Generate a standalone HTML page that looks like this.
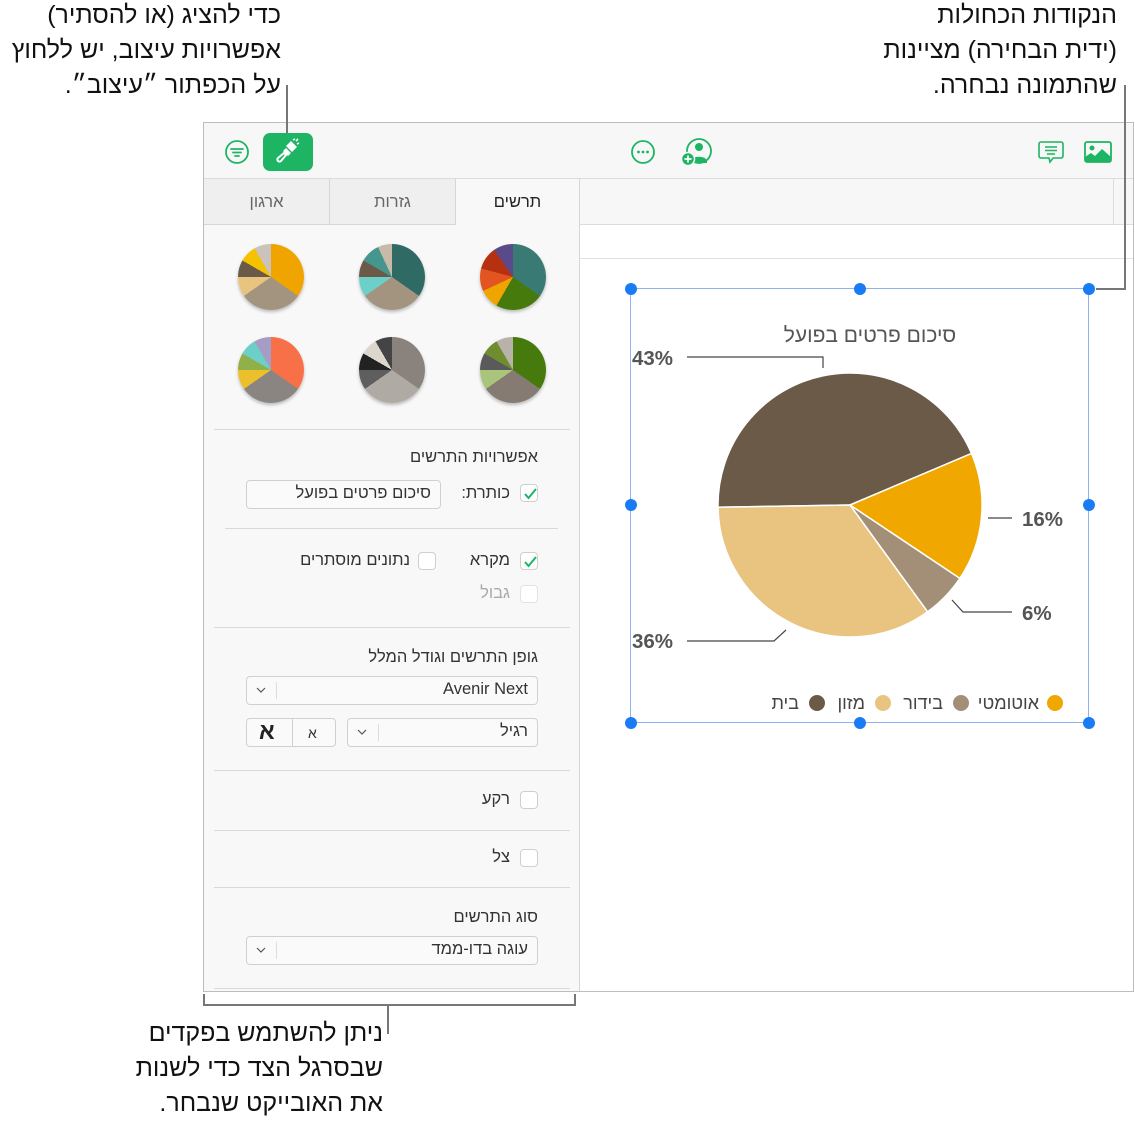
<!DOCTYPE html>
<html><head><meta charset="utf-8"><style>
*{margin:0;padding:0;box-sizing:border-box}
body{width:1135px;height:1121px;background:#fff;position:relative;overflow:hidden;font-family:"Liberation Sans","Noto Sans CJK SC",sans-serif;color:#222}
.a{position:absolute}
.ann{position:absolute;font-size:25px;line-height:35px;direction:rtl;text-align:right;color:#111;white-space:nowrap}
.t{position:absolute;direction:rtl;white-space:nowrap;font-size:16.5px;color:#333}
.hr{position:absolute;height:1px;background:#d9d9d9}
.cb{position:absolute;width:18px;height:18px;border:1px solid #cfcfcf;border-radius:4px;background:#fff}
.cb svg{position:absolute;left:1px;top:1px}
.box{position:absolute;border:1px solid #d0d0d0;border-radius:4px;background:#fafafa}
.pie{position:absolute;width:66px;height:66px;border-radius:50%;box-shadow:0 2px 3px rgba(0,0,0,.25)}
.dd{position:absolute;font-size:15px;color:#333;direction:ltr}
.h{position:absolute;width:12px;height:12px;border-radius:50%;background:#1a7cf5;margin:-6px 0 0 -6px}
</style></head><body>

<div class="ann" style="right:854px;top:-2px">כדי להציג (או להסתיר)<br>אפשרויות עיצוב, יש ללחוץ<br>על הכפתור ״עיצוב״.</div>
<div class="ann" style="right:18px;top:-2px">הנקודות הכחולות<br>(ידית הבחירה) מציינות<br>שהתמונה נבחרה.</div>
<div class="ann" style="right:752px;top:1016px">ניתן להשתמש בפקדים<br>שבסרגל הצד כדי לשנות<br>את האובייקט שנבחר.</div>

<!-- window -->
<div class="a" style="left:203px;top:122px;width:931px;height:870px;border:1px solid #bdbdbd;background:#fff"></div>
<div class="a" style="left:204px;top:123px;width:929px;height:56px;background:#f7f7f7;border-bottom:1px solid #dcdcdc"></div>
<div class="a" style="left:580px;top:179px;width:553px;height:46px;background:#f7f7f7;border-bottom:1px solid #dcdcdc"></div>
<div class="a" style="left:1113px;top:179px;width:1px;height:46px;background:#dcdcdc"></div>
<div class="a" style="left:580px;top:258px;width:553px;height:1px;background:#e2e2e2"></div>
<div class="a" style="left:204px;top:179px;width:376px;height:812px;background:#f8f8f8;border-right:1px solid #d6d6d6"></div>

<!-- callout lines -->
<div class="a" style="left:286px;top:85px;width:2px;height:48px;background:#777"></div>
<div class="a" style="left:1124px;top:85px;width:2px;height:204px;background:#777"></div>
<div class="a" style="left:1096px;top:288px;width:30px;height:2px;background:#777"></div>
<div class="a" style="left:203px;top:994px;width:373px;height:12px;border:2px solid #777;border-top:none"></div>
<div class="a" style="left:387px;top:1006px;width:2px;height:28px;background:#777"></div>

<!-- toolbar icons -->
<svg class="a" style="left:224px;top:139px" width="26" height="26" viewBox="0 0 26 26"><circle cx="13" cy="13" r="11" fill="none" stroke="#1db464" stroke-width="1.8"/><path d="M7 10h12M9 13.5h8M11 17h4" stroke="#1db464" stroke-width="1.8" stroke-linecap="round"/></svg>
<div class="a" style="left:263px;top:133px;width:50px;height:38px;background:#1db464;border-radius:7px"></div>
<svg class="a" style="left:274px;top:137px" width="28" height="30" viewBox="0 0 28 30"><path d="M17 4l6 6-5 5-6-6z" fill="#fff"/><path d="M12 11l5 5-3 3-5-5z" fill="#fff"/><path d="M10 16l2 2-5 6a2 2 0 0 1-3-3z" fill="none" stroke="#fff" stroke-width="2"/><path d="M19 3l2-1M23 7l2-1M22 4l2-2" stroke="#fff" stroke-width="1.6"/></svg>
<svg class="a" style="left:630px;top:139px" width="26" height="26" viewBox="0 0 26 26"><circle cx="13" cy="13" r="11" fill="none" stroke="#1db464" stroke-width="1.8"/><circle cx="8.5" cy="13" r="1.4" fill="#1db464"/><circle cx="13" cy="13" r="1.4" fill="#1db464"/><circle cx="17.5" cy="13" r="1.4" fill="#1db464"/></svg>
<svg class="a" style="left:680px;top:137px" width="34" height="30" viewBox="0 0 34 30"><circle cx="19" cy="14" r="12" fill="none" stroke="#1db464" stroke-width="1.8"/><circle cx="19" cy="10" r="4" fill="#1db464"/><path d="M11 23a9 6 0 0 1 16 0v3h-16z" fill="#1db464"/><circle cx="8" cy="22" r="6.5" fill="#1db464" stroke="#f7f7f7" stroke-width="1.5"/><path d="M8 18.5v7M4.5 22h7" stroke="#fff" stroke-width="1.8"/></svg>
<svg class="a" style="left:1037px;top:140px" width="28" height="26" viewBox="0 0 28 26"><path d="M4 2h20a2 2 0 0 1 2 2v12a2 2 0 0 1-2 2h-8l-3 4-1-4h-8a2 2 0 0 1-2-2v-12a2 2 0 0 1 2-2z" fill="none" stroke="#1db464" stroke-width="1.6"/><path d="M8 7h12M8 10.5h12M10 14h8" stroke="#1db464" stroke-width="1.5"/></svg>
<svg class="a" style="left:1084px;top:141px" width="28" height="22" viewBox="0 0 28 22"><rect x="1" y="1" width="26" height="20" rx="2" fill="none" stroke="#1db464" stroke-width="1.8"/><circle cx="8" cy="7" r="2.5" fill="#1db464"/><path d="M1 21v-5l6-4 4 3 7-7 9 8v5z" fill="#1db464"/></svg>

<!-- tabs -->
<div class="a" style="left:204px;top:179px;width:251px;height:46px;background:#efefef;border-bottom:1px solid #d6d6d6"></div>
<div class="a" style="left:329px;top:179px;width:1px;height:46px;background:#d6d6d6"></div>
<div class="a" style="left:455px;top:179px;width:1px;height:46px;background:#d6d6d6"></div>
<div class="t" style="left:455px;width:125px;text-align:center;top:193px;font-size:16.5px;color:#222">תרשים</div>
<div class="t" style="left:330px;width:125px;text-align:center;top:193px;font-size:16.5px;color:#666">גזרות</div>
<div class="t" style="left:204px;width:125px;text-align:center;top:193px;font-size:16.5px;color:#666">ארגון</div>

<!-- pies -->
<div class="pie" style="left:480px;top:244px;background:conic-gradient(#3a7a74 0 125deg,#467a0c 125deg 210deg,#f0a400 210deg 245deg,#e25420 245deg 285deg,#b5310f 285deg 325deg,#5a4a8a 325deg)"></div>
<div class="pie" style="left:359px;top:244px;background:conic-gradient(#2f6a64 0 125deg,#a39480 125deg 235deg,#6ccfc8 235deg 270deg,#6b5a48 270deg 300deg,#45968f 300deg 335deg,#c9b9a8 335deg)"></div>
<div class="pie" style="left:238px;top:244px;background:conic-gradient(#f0a400 0 125deg,#a39480 125deg 235deg,#e8c47f 235deg 270deg,#6b5a48 270deg 300deg,#f5c200 300deg 330deg,#cbc3bb 330deg)"></div>
<div class="pie" style="left:480px;top:337px;background:conic-gradient(#467a0c 0 125deg,#857b73 125deg 235deg,#a9c47d 235deg 270deg,#5a5a5a 270deg 300deg,#6f8c2e 300deg 330deg,#b8b2ab 330deg)"></div>
<div class="pie" style="left:359px;top:337px;background:conic-gradient(#8a837d 0 125deg,#b0aaa4 125deg 235deg,#5e5e5e 235deg 270deg,#222 270deg 300deg,#ddd6cc 300deg 330deg,#444 330deg)"></div>
<div class="pie" style="left:238px;top:337px;background:conic-gradient(#f87048 0 125deg,#8a8580 125deg 235deg,#ecc02c 235deg 270deg,#90b04a 270deg 300deg,#6ccfc8 300deg 330deg,#a59dc5 330deg)"></div>

<!-- sidebar controls -->
<div class="hr" style="left:214px;top:429px;width:356px"></div>
<div class="t" style="right:597px;top:448px">אפשרויות התרשים</div>
<div class="cb" style="left:520px;top:484px"><svg width="16" height="16"><path d="M3 8l3.5 4L14 3" fill="none" stroke="#1db464" stroke-width="2"/></svg></div>
<div class="t" style="right:625px;top:484px">כותרת:</div>
<div class="box" style="left:246px;top:480px;width:195px;height:29px;background:#fafafa"></div>
<div class="t" style="right:704px;top:484px">סיכום פרטים בפועל</div>
<div class="hr" style="left:225px;top:528px;width:333px"></div>
<div class="cb" style="left:520px;top:552px"><svg width="16" height="16"><path d="M3 8l3.5 4L14 3" fill="none" stroke="#1db464" stroke-width="2"/></svg></div>
<div class="t" style="right:625px;top:551px">מקרא</div>
<div class="cb" style="left:418px;top:552px"></div>
<div class="t" style="right:725px;top:551px">נתונים מוסתרים</div>
<div class="cb" style="left:520px;top:585px;border-color:#e3e3e3"></div>
<div class="t" style="right:625px;top:584px;color:#aaa">גבול</div>
<div class="hr" style="left:214px;top:627px;width:356px"></div>
<div class="t" style="right:597px;top:648px">גופן התרשים וגודל המלל</div>
<div class="box" style="left:246px;top:676px;width:292px;height:29px"></div>
<div class="a" style="left:276px;top:682px;width:1px;height:17px;background:#ddd"></div>
<svg class="a" style="left:256px;top:687px" width="10" height="7"><path d="M1 1l4 4 4-4" fill="none" stroke="#555" stroke-width="1.2"/></svg>
<div class="dd" style="right:607px;top:680px;font-size:16.5px">Avenir Next</div>
<div class="box" style="left:347px;top:718px;width:191px;height:29px"></div>
<div class="a" style="left:378px;top:724px;width:1px;height:17px;background:#ddd"></div>
<svg class="a" style="left:357px;top:729px" width="10" height="7"><path d="M1 1l4 4 4-4" fill="none" stroke="#555" stroke-width="1.2"/></svg>
<div class="t" style="right:607px;top:722px">רגיל</div>
<div class="box" style="left:246px;top:718px;width:90px;height:29px"></div>
<div class="a" style="left:292px;top:719px;width:1px;height:27px;background:#d0d0d0"></div>
<div class="t" style="left:259px;top:718px;font-size:23px;font-weight:bold;color:#222">א</div>
<div class="t" style="left:308px;top:725px;font-size:14px">א</div>
<div class="hr" style="left:214px;top:770px;width:356px"></div>
<div class="cb" style="left:520px;top:791px"></div>
<div class="t" style="right:625px;top:790px">רקע</div>
<div class="hr" style="left:214px;top:830px;width:356px"></div>
<div class="cb" style="left:520px;top:849px"></div>
<div class="t" style="right:625px;top:848px">צל</div>
<div class="hr" style="left:214px;top:887px;width:356px"></div>
<div class="t" style="right:597px;top:908px">סוג התרשים</div>
<div class="box" style="left:246px;top:936px;width:292px;height:29px"></div>
<div class="a" style="left:276px;top:942px;width:1px;height:17px;background:#ddd"></div>
<svg class="a" style="left:256px;top:947px" width="10" height="7"><path d="M1 1l4 4 4-4" fill="none" stroke="#555" stroke-width="1.2"/></svg>
<div class="t" style="right:607px;top:940px">עוגה בדו-ממד</div>
<div class="hr" style="left:214px;top:988px;width:356px"></div>

<!-- chart -->
<svg class="a" style="left:0;top:0" width="1135" height="1121" viewBox="0 0 1135 1121">
<rect x="630.5" y="288.5" width="458" height="434" fill="none" stroke="#8fb2ee" stroke-width="1"/>
<g stroke="#fff" stroke-width="1.5">
<path d="M850 505 L718.02 507.29 A132 132 0 0 1 971.51 453.43 Z" fill="#6b5a48"/>
<path d="M850 505 L971.51 453.43 A132 132 0 0 1 959.83 578.43 Z" fill="#f0a800"/>
<path d="M850 505 L959.83 578.43 A132 132 0 0 1 927.59 611.79 Z" fill="#a38f78"/>
<path d="M850 505 L927.59 611.79 A132 132 0 0 1 718.02 507.29 Z" fill="#e8c480"/>
</g>
<g fill="none" stroke="#444" stroke-width="1.2">
<path d="M687 357H823V368"/><path d="M988 518H1012"/><path d="M952 600L963 612H1012"/><path d="M687 641H774L786 630"/>
</g>
<g font-family="Liberation Sans,sans-serif" font-weight="bold" font-size="20.5" fill="#555">
<text x="632" y="365">43%</text><text x="1022" y="526">16%</text><text x="1022" y="620">6%</text><text x="632" y="648">36%</text>
</g>
<text x="870" y="342" text-anchor="middle" font-family="Liberation Sans,sans-serif" font-size="21" fill="#555" direction="rtl">סיכום פרטים בפועל</text>
<circle cx="1055" cy="703" r="8" fill="#f0a800"/><circle cx="961" cy="703" r="8" fill="#a38f78"/><circle cx="883" cy="703" r="8" fill="#e8c480"/><circle cx="817" cy="703" r="8" fill="#6b5a48"/>
<g font-family="Liberation Sans,sans-serif" font-size="18" fill="#444" text-anchor="start" direction="rtl">
<text x="1039" y="709">אוטומטי</text><text x="943" y="709">בידור</text><text x="865" y="709">מזון</text><text x="799" y="709">בית</text>
</g>
</svg>
<div class="h" style="left:631px;top:289px"></div><div class="h" style="left:860px;top:289px"></div><div class="h" style="left:1089px;top:289px"></div>
<div class="h" style="left:631px;top:505px"></div><div class="h" style="left:1089px;top:505px"></div>
<div class="h" style="left:631px;top:723px"></div><div class="h" style="left:860px;top:723px"></div><div class="h" style="left:1089px;top:723px"></div>
</body></html>
